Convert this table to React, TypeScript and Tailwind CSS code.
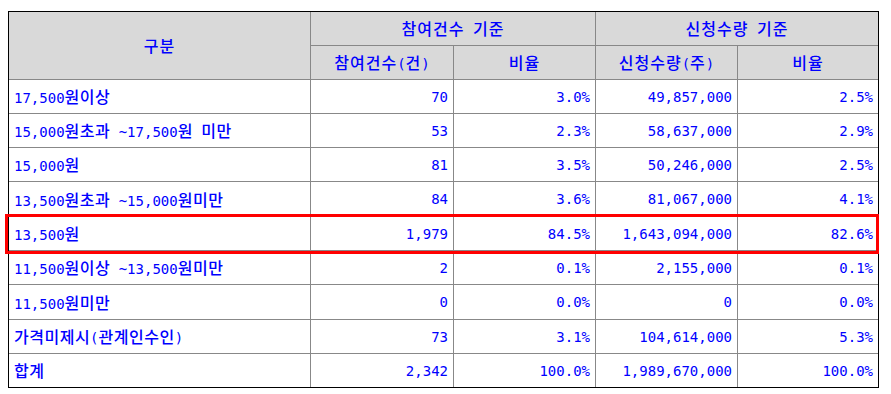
const rows = [
  { label: "17,500원이상", a: "70", b: "3.0%", c: "49,857,000", d: "2.5%", h: "h-[34px]" },
  { label: "15,000원초과 ~17,500원 미만", a: "53", b: "2.3%", c: "58,637,000", d: "2.9%", h: "h-[34px]" },
  { label: "15,000원", a: "81", b: "3.5%", c: "50,246,000", d: "2.5%", h: "h-[34px]" },
  { label: "13,500원초과 ~15,000원미만", a: "84", b: "3.6%", c: "81,067,000", d: "4.1%", h: "h-[35px]" },
  { label: "13,500원", a: "1,979", b: "84.5%", c: "1,643,094,000", d: "82.6%", h: "h-[34px]" },
  { label: "11,500원이상 ~13,500원미만", a: "2", b: "0.1%", c: "2,155,000", d: "0.1%", h: "h-[34px]" },
  { label: "11,500원미만", a: "0", b: "0.0%", c: "0", d: "0.0%", h: "h-[35px]" },
  { label: "가격미제시(관계인수인)", a: "73", b: "3.1%", c: "104,614,000", d: "5.3%", h: "h-[34px]" },
  { label: "합계", a: "2,342", b: "100.0%", c: "1,989,670,000", d: "100.0%", h: "h-[34px]" },
];

// Hangul runs get a wider advance, like the bitmap font in the screenshot
function T({ text, head }: { text: string; head?: boolean }) {
  const parts = text.split(/([가-힣]+)/);
  return (
    <span className="whitespace-pre">
      {parts.map((p, i) =>
        /[가-힣]/.test(p) ? (
          <span
            key={i}
            className={
              head
                ? "font-['Noto_Sans_CJK_KR',sans-serif] text-[16px] font-medium tracking-[1px]"
                : "font-['Noto_Sans_CJK_KR',sans-serif] text-[16px] font-medium tracking-[0.5px]"
            }
          >
            {p}
          </span>
        ) : (
          <span key={i}>{p}</span>
        )
      )}
    </span>
  );
}

function Num({ v, w }: { v: string; w: string }) {
  return (
    <div className={`${w} flex items-center justify-end border-l border-[#888] pr-[5px]`}>
      {v}
    </div>
  );
}

export default function App() {
  return (
    <div className="relative min-h-[394px] w-[891px] bg-white pl-[8px] pt-[11px] font-['DejaVu_Sans_Mono','Noto_Sans_CJK_KR',monospace] text-[14px] leading-none text-[#0000ff]">
      <div className="w-[871px] border border-black">
        {/* header */}
        <div className="flex h-[67px] bg-[#d9d9d9]">
          <div className="flex w-[301px] items-center justify-center">
            <T text="구분" head />
          </div>
          <div className="flex flex-1 flex-col border-l border-[#888]">
            <div className="flex h-[33px]">
              <div className="flex w-[284px] items-center justify-center">
                <T text="참여건수 기준" head />
              </div>
              <div className="flex flex-1 items-center justify-center border-l border-[#888]">
                <T text="신청수량 기준" head />
              </div>
            </div>
            <div className="flex h-[34px] border-t border-[#888]">
              <div className="flex w-[142px] items-center justify-center">
                <T text="참여건수(건)" head />
              </div>
              <div className="flex w-[142px] items-center justify-center border-l border-[#888]">
                <T text="비율" head />
              </div>
              <div className="flex w-[142px] items-center justify-center border-l border-[#888]">
                <T text="신청수량(주)" head />
              </div>
              <div className="flex flex-1 items-center justify-center border-l border-[#888]">
                <T text="비율" head />
              </div>
            </div>
          </div>
        </div>

        {/* body */}
        {rows.map((r) => (
          <div key={r.label} className={`flex ${r.h} border-t border-[#888]`}>
            <div className="flex w-[301px] items-center pl-[5px]">
              <T text={r.label} />
            </div>
            <Num v={r.a} w="w-[143px]" />
            <Num v={r.b} w="w-[142px]" />
            <Num v={r.c} w="w-[142px]" />
            <Num v={r.d} w="flex-1" />
          </div>
        ))}
      </div>

      {/* highlight box */}
      <div className="absolute left-[5px] top-[214px] h-[40px] w-[874px] border-[3px] border-[#ff0000]" />
    </div>
  );
}
